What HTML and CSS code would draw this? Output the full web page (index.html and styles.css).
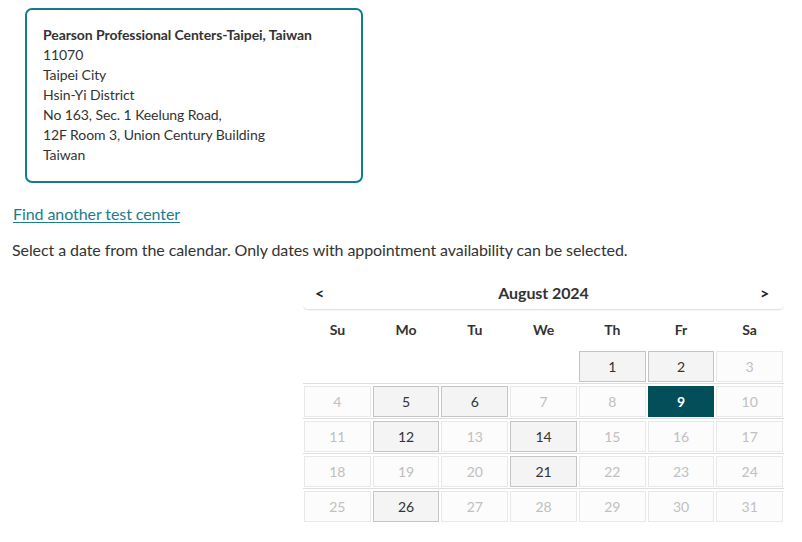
FILE: index.html
```html
<!DOCTYPE html>
<html lang="en">
<head>
<meta charset="utf-8">
<title>Select date</title>
<link rel="stylesheet" href="styles.css">
</head>
<body>
<div class="page">
  <div class="address">
    <div class="addr-title">Pearson Professional Centers-Taipei, Taiwan</div>
    <div>11070</div>
    <div>Taipei City</div>
    <div>Hsin-Yi District</div>
    <div>No 163, Sec. 1 Keelung Road,</div>
    <div>12F Room 3, Union Century Building</div>
    <div>Taiwan</div>
  </div>
  <a class="find-link" href="#">Find another test center</a>
  <p class="hint">Select a date from the calendar. Only dates with appointment availability can be selected.</p>
  <div class="calendar">
    <div class="cal-head">
      <span class="nav">&lt;</span>
      <span class="month">August 2024</span>
      <span class="nav">&gt;</span>
    </div>
    <div class="weekdays">
      <span>Su</span><span>Mo</span><span>Tu</span><span>We</span><span>Th</span><span>Fr</span><span>Sa</span>
    </div>
    <div class="week first">
      <span class="empty"></span><span class="empty"></span><span class="empty"></span><span class="empty"></span>
      <span class="day avail">1</span><span class="day avail">2</span><span class="day off">3</span>
    </div>
    <div class="week">
      <span class="day off">4</span><span class="day avail">5</span><span class="day avail">6</span><span class="day off">7</span>
      <span class="day off">8</span><span class="day selected">9</span><span class="day off">10</span>
    </div>
    <div class="week">
      <span class="day off">11</span><span class="day avail">12</span><span class="day off">13</span><span class="day avail">14</span>
      <span class="day off">15</span><span class="day off">16</span><span class="day off">17</span>
    </div>
    <div class="week">
      <span class="day off">18</span><span class="day off">19</span><span class="day off">20</span><span class="day avail">21</span>
      <span class="day off">22</span><span class="day off">23</span><span class="day off">24</span>
    </div>
    <div class="week">
      <span class="day off">25</span><span class="day avail">26</span><span class="day off">27</span><span class="day off">28</span>
      <span class="day off">29</span><span class="day off">30</span><span class="day off">31</span>
    </div>
  </div>
</div>
</body>
</html>
```
FILE: styles.css
```css
* { box-sizing: border-box; }
html, body { margin: 0; padding: 0; background: #fff; }
body {
  font-family: Lato, "Open Sans", "Liberation Sans", sans-serif;
  color: #333;
  letter-spacing: -0.08px;
}
.page {
  padding: 8px 12px 0 12px;
}
.address {
  margin-left: 13px;
  width: 338px;
  border: 2px solid #0e7c93;
  border-radius: 7px;
  padding: 15px 16px 16px 16px;
  font-size: 14px;
  line-height: 20px;
  color: #333;
}
.addr-title { font-weight: 700; }
.find-link {
  display: inline-block;
  margin-top: 21px;
  margin-left: 1px;
  font-size: 16px;
  line-height: 20px;
  color: #1a7c8c;
  text-decoration: underline;
  text-underline-offset: 2px;
}
.hint {
  margin: 16px 0 0 0;
  font-size: 16px;
  line-height: 20px;
  color: #333;
}
.calendar {
  margin: 16px 0 0 291px;
  width: 481px;
}
.cal-head {
  display: flex;
  justify-content: space-between;
  align-items: center;
  height: 34px;
  padding: 0 12px 1px 12px;
  border-bottom: 1px solid #e2e2e2;
  border-radius: 0 0 5px 5px;
  box-shadow: 0 1px 1px rgba(0,0,0,0.04);
}
.nav { font-weight: 700; font-size: 16px; color: #222; width: 12px; }
.month { font-weight: 700; font-size: 16px; color: #333; }
.weekdays {
  display: grid;
  grid-template-columns: repeat(7, 1fr);
  height: 38px;
  align-items: center;
  font-weight: 700;
  font-size: 14px;
  text-align: center;
  color: #333;
}
.week {
  display: grid;
  grid-template-columns: repeat(7, 1fr);
  column-gap: 2px;
  padding: 2px 1px 1px 1px;
  border-top: 1px solid #dedede;
}
.week.first { border-top: 1px solid transparent; }
.day, .empty {
  height: 31px;
  display: flex;
  align-items: center;
  justify-content: center;
  font-size: 14px;
}
.day { border: 1px solid #e8e8e8; background: #fcfcfc; color: #c0c0c0; }
.day.avail { border-color: #c4c4c4; background: #f4f4f4; color: #333; }
.day.selected { border-color: #024f59; background: #024f59; color: #fff; font-weight: 700; }
```
